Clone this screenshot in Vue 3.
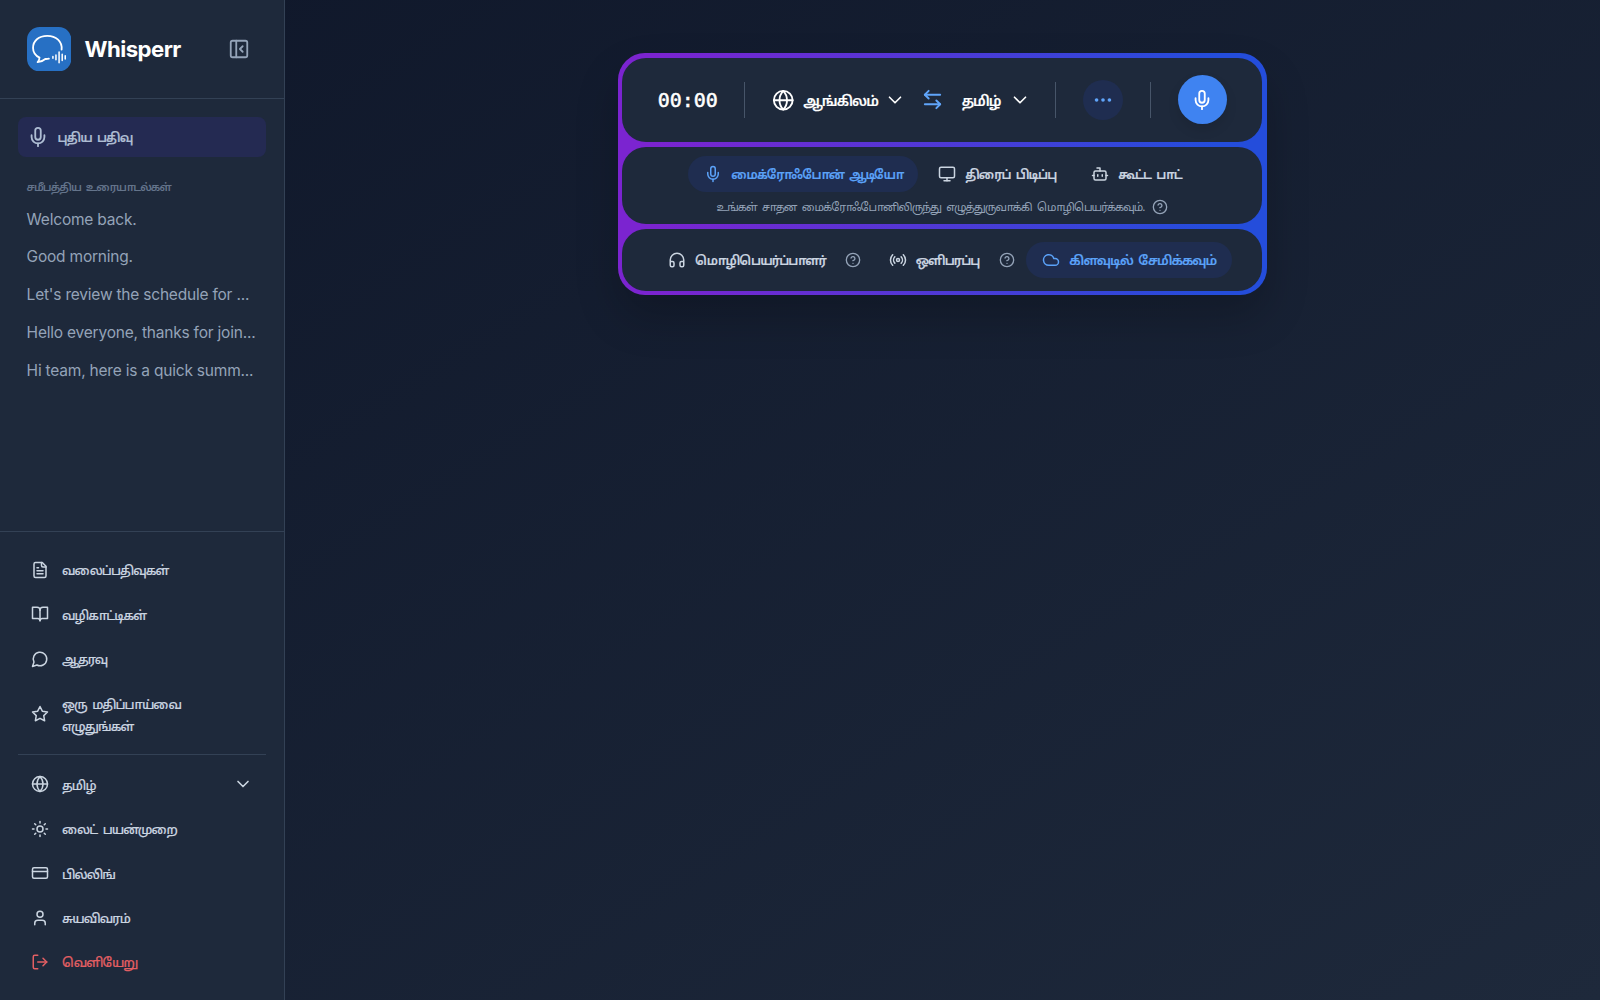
<template>
  <div class="page">
    <aside class="sidebar">
      <header class="brand">
        <svg class="logo" viewBox="0 0 44 44">
          <rect width="44" height="44" rx="12.5" fill="#2770c4" />
          <g fill="none" stroke="#fff" stroke-width="1.8" stroke-linecap="round" stroke-linejoin="round">
            <path d="M34.300 22.500c.9-8.200-5.600-13.700-14.200-13.700S6 13.700 6 20.700c0 4.100 2.500 7.600 6.400 9.600 0 1.700-.7 3.200-1.900 4.500 3.300-.2 5.700-1.400 7.600-3.100 1.400.1 2.300 0 3.600-.3" />
            <path d="M25.700 29.300v1.600M28.700 27.800v4.600M31.800 24.800v10.600M34.900 27v6.200M37.900 28.600v3" stroke-width="1.500" />
          </g>
        </svg>
        <span class="brand-name">Whisperr</span>
        <Icon name="panel" class="collapse" />
      </header>

      <div class="history">
        <button class="new-recording">
          <Icon name="mic" />
          <span class="label">புதிய பதிவு</span>
        </button>
        <h2 class="history-title">சமீபத்திய உரையாடல்கள்</h2>
        <a v-for="c in conversations" :key="c" class="conversation">{{ c }}</a>
      </div>

      <nav class="menu">
        <a v-for="m in links" :key="m.icon" class="menu-item">
          <Icon :name="m.icon" />
          <span class="menu-label">{{ m.label }}</span>
        </a>
        <hr class="menu-line" />
        <a v-for="m in account" :key="m.icon" class="menu-item" :class="{ danger: m.danger }">
          <Icon :name="m.icon" />
          <span class="menu-label">{{ m.label }}</span>
          <Icon v-if="m.dropdown" name="chevron" class="menu-chevron" />
        </a>
      </nav>
    </aside>

    <main class="main">
      <div class="panel">
        <section class="card controls">
          <span class="timer">00:00</span>
          <i class="divider"></i>
          <div class="language source">
            <Icon name="globe" class="globe" />
            <span class="label language-name">ஆங்கிலம்</span>
            <Icon name="chevron" class="chevron" />
          </div>
          <Icon name="swap" class="swap" />
          <div class="language target">
            <span class="label language-name">தமிழ்</span>
            <Icon name="chevron" class="chevron" />
          </div>
          <i class="divider"></i>
          <button class="more"><Icon name="dots" /></button>
          <i class="divider"></i>
          <button class="record"><Icon name="mic" /></button>
        </section>

        <section class="card sources">
          <div class="tabs">
            <button v-for="t in tabs" :key="t.icon" class="pill" :class="{ active: t.active }">
              <Icon :name="t.icon" />
              <span class="label">{{ t.label }}</span>
            </button>
          </div>
          <p class="hint">
            <span class="hint-text">உங்கள் சாதன மைக்ரோஃபோனிலிருந்து எழுத்துருவாக்கி மொழிபெயர்க்கவும்.</span>
            <Icon name="help" class="help" />
          </p>
        </section>

        <section class="card options">
          <div class="option">
            <button class="pill"><Icon name="headphones" /><span class="label">மொழிபெயர்ப்பாளர்</span></button>
            <Icon name="help" class="help" />
          </div>
          <div class="option">
            <button class="pill"><Icon name="radio" /><span class="label">ஒளிபரப்பு</span></button>
            <Icon name="help" class="help" />
          </div>
          <button class="pill active save"><Icon name="cloud" /><span class="label">கிளவுடில் சேமிக்கவும்</span></button>
        </section>
      </div>
    </main>
  </div>
</template>

<script setup>
import { h } from 'vue'

const icons = {
  panel: ['M5 3h14a2 2 0 0 1 2 2v14a2 2 0 0 1-2 2H5a2 2 0 0 1-2-2V5a2 2 0 0 1 2-2z', 'M9 3v18', 'm16 15-3-3 3-3'],
  mic: ['M12 2a3 3 0 0 0-3 3v7a3 3 0 0 0 6 0V5a3 3 0 0 0-3-3z', 'M19 10v2a7 7 0 0 1-14 0v-2', 'M12 19v3'],
  file: ['M15 2H6a2 2 0 0 0-2 2v16a2 2 0 0 0 2 2h12a2 2 0 0 0 2-2V7z', 'M14 2v4a2 2 0 0 0 2 2h4', 'M10 9H8', 'M16 13H8', 'M16 17H8'],
  book: ['M12 7v14', 'M2 3h6a4 4 0 0 1 4 4 4 4 0 0 1 4-4h6v15h-7a3 3 0 0 0-3 3 3 3 0 0 0-3-3H2z'],
  message: ['M7.900 20A9 9 0 1 0 4 16.100L2 22z'],
  star: ['m12 2 3.090 6.260L22 9.270l-5 4.870 1.180 6.880L12 17.770l-6.180 3.250L7 14.140 2 9.270l6.910-1.010z'],
  globe: ['M2 12a10 10 0 1 0 20 0a10 10 0 1 0-20 0', 'M12 2a14.500 14.500 0 0 0 0 20a14.500 14.500 0 0 0 0-20', 'M2 12h20'],
  sun: ['M8 12a4 4 0 1 0 8 0a4 4 0 1 0-8 0', 'M12 2v2', 'M12 20v2', 'm4.930 4.930 1.410 1.410', 'm17.660 17.660 1.410 1.410', 'M2 12h2', 'M20 12h2', 'm6.340 17.660-1.410 1.410', 'm19.070 4.930-1.410 1.410'],
  card: ['M4 5h16a2 2 0 0 1 2 2v10a2 2 0 0 1-2 2H4a2 2 0 0 1-2-2V7a2 2 0 0 1 2-2z', 'M2 10h20'],
  user: ['M19 21v-2a4 4 0 0 0-4-4H9a4 4 0 0 0-4 4v2', 'M8 7a4 4 0 1 0 8 0a4 4 0 1 0-8 0'],
  logout: ['M9 21H5a2 2 0 0 1-2-2V5a2 2 0 0 1 2-2h4', 'm16 17 5-5-5-5', 'M21 12H9'],
  chevron: ['m6 9 6 6 6-6'],
  swap: ['M8 3 4 7l4 4', 'M4 7h16', 'm16 21 4-4-4-4', 'M20 17H4'],
  dots: ['M4 12a1 1 0 1 0 2 0a1 1 0 1 0-2 0', 'M11 12a1 1 0 1 0 2 0a1 1 0 1 0-2 0', 'M18 12a1 1 0 1 0 2 0a1 1 0 1 0-2 0'],
  monitor: ['M4 3h16a2 2 0 0 1 2 2v10a2 2 0 0 1-2 2H4a2 2 0 0 1-2-2V5a2 2 0 0 1 2-2z', 'M8 21h8', 'M12 17v4'],
  bot: ['M12 8V4H8', 'M6 8h12a2 2 0 0 1 2 2v8a2 2 0 0 1-2 2H6a2 2 0 0 1-2-2v-8a2 2 0 0 1 2-2z', 'M2 14h2', 'M20 14h2', 'M15 13v2', 'M9 13v2'],
  help: ['M2 12a10 10 0 1 0 20 0a10 10 0 1 0-20 0', 'M9.090 9a3 3 0 0 1 5.830 1c0 2-3 3-3 3', 'M12 17h.01'],
  headphones: ['M3 14h3a2 2 0 0 1 2 2v3a2 2 0 0 1-2 2H5a2 2 0 0 1-2-2v-7a9 9 0 0 1 18 0v7a2 2 0 0 1-2 2h-1a2 2 0 0 1-2-2v-3a2 2 0 0 1 2-2h3'],
  radio: ['M4.900 19.100C1 15.200 1 8.800 4.900 4.900', 'M7.800 16.200c-2.300-2.300-2.300-6.100 0-8.500', 'M10 12a2 2 0 1 0 4 0a2 2 0 1 0-4 0', 'M16.200 7.800c2.300 2.300 2.300 6.100 0 8.500', 'M19.100 4.900C23 8.800 23 15.100 19.100 19'],
  cloud: ['M17.500 19H9a7 7 0 1 1 6.710-9h1.790a4.500 4.500 0 1 1 0 9z'],
}

const Icon = ({ name }) =>
  h('svg', { class: 'icon', viewBox: '0 0 24 24' }, icons[name].map(d => h('path', { d })))
Icon.props = ['name']

const conversations = [
  'Welcome back.',
  'Good morning.',
  "Let's review the schedule for ...",
  'Hello everyone, thanks for join...',
  'Hi team, here is a quick summ...',
]

const links = [
  { icon: 'file', label: 'வலைப்பதிவுகள்' },
  { icon: 'book', label: 'வழிகாட்டிகள்' },
  { icon: 'message', label: 'ஆதரவு' },
  { icon: 'star', label: 'ஒரு மதிப்பாய்வை எழுதுங்கள்' },
]

const account = [
  { icon: 'globe', label: 'தமிழ்', dropdown: true },
  { icon: 'sun', label: 'லைட் பயன்முறை' },
  { icon: 'card', label: 'பில்லிங்' },
  { icon: 'user', label: 'சுயவிவரம்' },
  { icon: 'logout', label: 'வெளியேறு', danger: true },
]

const tabs = [
  { icon: 'mic', label: 'மைக்ரோஃபோன் ஆடியோ', active: true },
  { icon: 'monitor', label: 'திரைப் பிடிப்பு' },
  { icon: 'bot', label: 'கூட்ட பாட்' },
]
</script>

<style>
body {
  background: #0f172a;
}
</style>

<style scoped>
.page {
  display: flex;
  width: 1600px;
  height: 1000px;
  overflow: hidden;
  font-family: Inter, 'Noto Sans Tamil', 'Noto Sans', sans-serif;
  font-size: 12.600px;
  letter-spacing: -0.075em;
  word-spacing: 3px;
  background: linear-gradient(to bottom right, #0f172a, #1e293b);
}
.page * { box-sizing: border-box; }
.page button {
  border: 0;
  background: none;
  font: inherit;
  letter-spacing: inherit;
  word-spacing: inherit;
  color: inherit;
}

.icon {
  flex: none;
  width: 18px;
  height: 18px;
  fill: none;
  stroke: currentColor;
  stroke-width: 2;
  stroke-linecap: round;
  stroke-linejoin: round;
}

/* Tamil glyphs sit high in the line box */
.label {
  padding-top: 4px;
  -webkit-text-stroke: 0.150px currentColor;
}

/* Sidebar */
.sidebar {
  display: flex;
  flex-direction: column;
  flex: none;
  width: 284.500px;
  background: #1e293b;
  border-right: 1px solid #334155;
  color: #cbd5e1;
}
.brand {
  display: flex;
  align-items: center;
  height: 99px;
  padding: 0 34px 0 26.600px;
  border-bottom: 1px solid #334155;
}
.logo { width: 44.400px; height: 44.400px; }
.brand-name {
  flex: 1;
  margin-left: 13.500px;
  padding-bottom: 2px;
  color: #fff;
  font-size: 22.200px;
  font-weight: 700;
  letter-spacing: -0.550px;
}
.collapse {
  width: 22px;
  height: 22px;
  color: #94a3b8;
}
.history {
  flex: 1;
  padding: 17.600px;
}
.page .new-recording {
  display: flex;
  align-items: center;
  gap: 9px;
  width: 248px;
  height: 40px;
  padding: 0 9px;
  border-radius: 8px;
  background: #242a52;
  color: #aebdd3;
  font-size: 12.400px;
  font-weight: 600;
}
.new-recording .icon { width: 22px; height: 22px; }
.history-title {
  height: 18px;
  margin: 22.500px 0 3.500px 9px;
  color: #64748b;
  font-size: 10.800px;
  font-weight: 600;
  line-height: 18px;
}
.conversation {
  display: block;
  height: 37.800px;
  padding-left: 9px;
  color: #94a3b8;
  font-size: 15.500px;
  letter-spacing: -0.210px;
  word-spacing: 0;
  line-height: 37.800px;
  white-space: nowrap;
}
.menu {
  height: 469px;
  padding: 15.800px 17.600px 0;
  border-top: 1px solid #334155;
}
.menu-item {
  display: flex;
  align-items: center;
  gap: 13.400px;
  padding: 11.100px 13px;
  font-weight: 500;
  line-height: 22.200px;
}
.menu-label {
  max-width: 140px;
  margin: 1.500px 0 -1.500px;
  -webkit-text-stroke: 0.150px currentColor;
}
.menu-item .menu-chevron {
  width: 20px;
  height: 20px;
  margin-left: auto;
}
.menu-line {
  height: 1px;
  margin: 6.500px 0 7.200px;
  border: 0;
  background: #334155;
}
.danger { color: #e25f63; }

/* Recorder panel */
.main {
  flex: 1;
  display: flex;
  justify-content: center;
  align-items: flex-start;
  padding-top: 53.300px;
}
.panel {
  display: flex;
  flex-direction: column;
  gap: 4.400px;
  width: 649px;
  padding: 4.400px;
  border-radius: 27px;
  background: linear-gradient(to right, #7b24d0 6%, #244ddb 92%);
  box-shadow: 0 22px 44px rgba(0, 0, 0, 0.2);
}
.card {
  border-radius: 24px;
  background: #1e293b;
  color: #cbd5e1;
}
.controls {
  display: flex;
  align-items: center;
  height: 84.500px;
  padding: 0 35.500px;
  color: #fff;
}
.timer {
  flex: none;
  width: 86.500px;
  font-family: 'DejaVu Sans Mono', monospace;
  font-size: 20px;
  letter-spacing: 0;
  -webkit-text-stroke: 0.500px #fff;
}
.divider {
  flex: none;
  width: 1px;
  height: 36px;
  background: #475569;
}
.language {
  display: flex;
  align-items: center;
  flex: none;
  font-size: 14px;
  font-weight: 600;
}
.source { margin-left: 26.500px; }
.source .language-name { width: 75px; }
.target .language-name { width: 41px; }
.language-name { white-space: nowrap; }
.globe { width: 22.500px; height: 22.500px; margin-right: 9px; }
.chevron {
  width: 22px;
  height: 22px;
  margin-left: 6px;
  stroke-width: 1.800;
}
.swap {
  width: 23px;
  height: 23px;
  margin: 0 17.500px 0 15px;
  color: #60a5fa;
}
.target { margin-right: 24.500px; }
.page .more,
.page .record {
  display: grid;
  place-items: center;
  flex: none;
  padding: 0;
  border-radius: 50%;
}
.page .more {
  width: 40px;
  height: 40px;
  margin: 0 26.800px;
  background: #1f2d50;
  color: #60a5fa;
}
.page .record {
  width: 49px;
  height: 49px;
  margin-left: 26.800px;
  background: #3f83f1;
  color: #fff;
  box-shadow: 0 6px 12px rgba(0, 0, 0, 0.1);
}
.more .icon { width: 22px; height: 22px; }
.record .icon { width: 22px; height: 22px; }
.sources {
  height: 77.800px;
  padding-top: 9px;
}
.tabs {
  display: flex;
  justify-content: center;
  gap: 4.400px;
}
.pill {
  display: flex;
  align-items: center;
  gap: 9px;
  height: 36px;
  border-radius: 18px;
  white-space: nowrap;
}
.page .pill {
  padding: 0 16px;
  font-size: 12.400px;
  font-weight: 600;
}
.tabs .label { margin-right: -1.500px; }
.page .pill.active {
  background: #1f2d50;
  color: #5ba2f8;
}
.page .pill.save { font-size: 12.900px; }
.hint {
  display: flex;
  justify-content: center;
  align-items: center;
  gap: 7.500px;
  height: 20px;
  margin: 5px 0 0;
  color: #94a3b8;
  font-size: 11.050px;
}
.hint-text { padding-top: 2px; }
.help {
  width: 16px;
  height: 16px;
  color: #94a3b8;
}
.options {
  display: flex;
  align-items: center;
  justify-content: space-between;
  height: 62.200px;
  padding: 0 30px 0 29.800px;
}
.option {
  display: flex;
  align-items: center;
  gap: 3.500px;
}
</style>
